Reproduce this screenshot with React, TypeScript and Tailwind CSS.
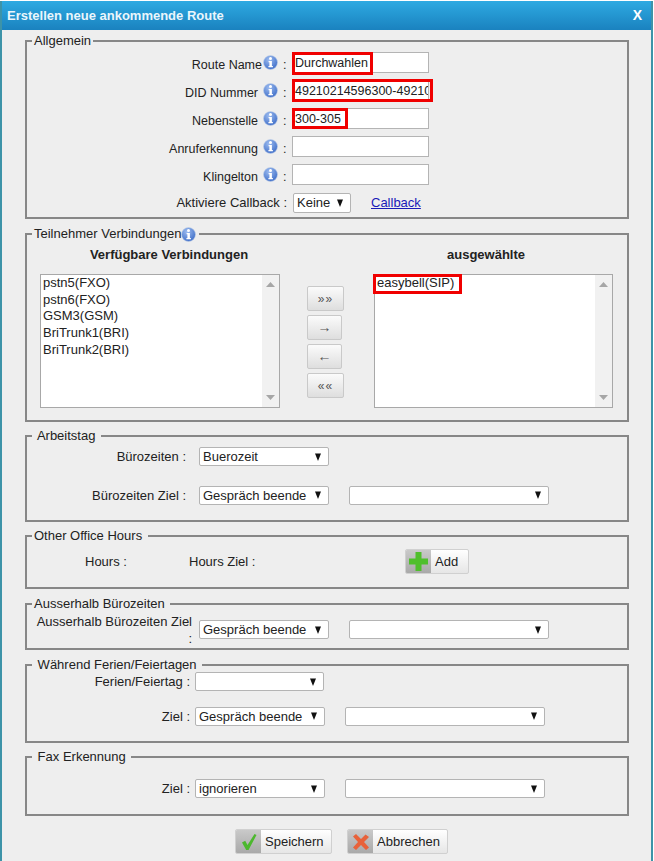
import React from "react";

function Info() {
  return (
    <svg width="15" height="15" viewBox="0 0 15 15" className="shrink-0">
      <defs>
        <radialGradient id="ig" cx="0.4" cy="0.3" r="0.8">
          <stop offset="0" stopColor="#9dbcf0" />
          <stop offset="1" stopColor="#3566c4" />
        </radialGradient>
      </defs>
      <circle cx="7.5" cy="7.5" r="7" fill="url(#ig)" stroke="#c5d3ea" strokeWidth="0.6" />
      <circle cx="7.5" cy="3.6" r="1.5" fill="#fff" />
      <path d="M5.600 5.900h3.300v5h1v1.300H5.400v-1.300h1V7.200h-.8z" fill="#fff" />
    </svg>
  );
}

function Arrow() {
  return (
    <svg width="6" height="8" viewBox="0 0 6 8" className="shrink-0">
      <path d="M0 .5h6L3 8z" fill="#111" />
    </svg>
  );
}

function Sel({ w, text, cls = "" }: { w: string; text?: string; cls?: string }) {
  return (
    <div className={`flex h-[19px] items-center justify-between rounded-[2px] border border-[#b4b4b4] bg-white pl-[3px] pr-[7px] text-[#222] ${w} ${cls}`}>
      <span className="whitespace-nowrap">{text}</span>
      <Arrow />
    </div>
  );
}

function Field({ legend, h, children, cls = "" }: { legend: React.ReactNode; h: string; children: React.ReactNode; cls?: string }) {
  return (
    <fieldset className={`ml-[23px] mr-[22px] min-w-0 border-2 border-[#878787] p-0 ${h} ${cls}`}>
      <legend className="ml-[5px] block h-[16px] whitespace-pre bg-[#eeeeee] px-[2px] leading-[16px]">{legend}</legend>
      {children}
    </fieldset>
  );
}

function TextRow({ label, gap, value, box, top }: { label: string; gap: string; value?: string; box?: string; top: string }) {
  return (
    <div className={`flex h-[21px] items-center text-[12.5px] ${top}`}>
      <div className="flex w-[251px] items-center justify-end">
        <span className={`pt-[6px] whitespace-nowrap ${gap}`}>{label}</span>
        <Info />
      </div>
      <span className="ml-[5px] w-[6px] pt-[6px]">:</span>
      <div className="relative ml-[3px] h-[21px] w-[137px]">
        <input
          readOnly
          value={value ?? ""}
          className="h-full w-full border border-[#b4b4b4] bg-white pl-[2px] text-[#222] outline-none"
        />
        {box ? <div className={`absolute border-[3px] border-[#f00000] ${box}`} /> : null}
      </div>
    </div>
  );
}

function ListBox({ items, w }: { items: React.ReactNode; w: string }) {
  return (
    <div className={`flex h-[134px] border border-[#a8a8a8] bg-white ${w}`}>
      <div className="flex-1 pl-[2px] leading-[16.7px] text-[#222]">{items}</div>
      <div className="flex w-[17px] flex-col items-center justify-between bg-[#f1f1f1] py-[7px]">
        <svg width="9" height="5" viewBox="0 0 9 5"><path d="M4.500 0L9 5H0z" fill="#a6a6a6" /></svg>
        <svg width="9" height="5" viewBox="0 0 9 5"><path d="M0 0h9L4.500 5z" fill="#a6a6a6" /></svg>
      </div>
    </div>
  );
}

function MoveBtn({ w, cls, children }: { w: string; cls: string; children: React.ReactNode }) {
  return (
    <div className={`flex h-[25px] items-center justify-center rounded-[2px] border border-[#c9c9c9] bg-gradient-to-b from-[#fbfbfb] to-[#dedede] text-[#555] ${w} ${cls}`}>
      {children}
    </div>
  );
}

function IconBtn({ icon, label, w }: { icon: React.ReactNode; label: string; w: string }) {
  return (
    <div className={`flex h-[25px] items-stretch overflow-hidden rounded-[2px] border border-[#d0d0d0] bg-gradient-to-b from-[#ffffff] to-[#e6e6e6] ${w}`}>
      <div className="flex w-[25px] items-center justify-center bg-gradient-to-b from-[#c9c9c9] to-[#a9a9a9]">{icon}</div>
      <span className="flex flex-1 items-center justify-start pl-[4px] text-[#222]">{label}</span>
    </div>
  );
}

export default function App() {
  return (
    <div className="h-[861px] w-[654px] overflow-hidden bg-white pt-[1px] font-['Liberation_Sans',sans-serif] text-[13px] text-[#222]">
      <div className="h-[860px] w-[653px] border-x-2 border-[#3d93a8] bg-[#eeeeee]">
        <div className="flex h-[29px] items-center justify-between bg-gradient-to-b from-[#2eaae2] to-[#1a82bf] pl-[5px] pr-[9px] text-[13px] font-bold text-[#eaf6fc]">
          <span>Erstellen neue ankommende Route</span>
          <span className="text-[14px] text-white">X</span>
        </div>

        <Field legend="Allgemein" h="h-[186px]" cls="mt-[3px]">
          <TextRow label="Route Name" gap="mr-[1px]" value="Durchwahlen" top="mt-[3px]" box="left-0 top-0 h-[23px] w-[81px]" />
          <TextRow label="DID Nummer" gap="mr-[5px]" value="49210214596300-49210" top="mt-[7px]" box="left-0 -top-[1px] h-[23px] w-[141px]" />
          <TextRow label="Nebenstelle" gap="mr-[5px]" value="300-305" top="mt-[7px]" box="left-0 top-0 h-[21px] w-[56px]" />
          <TextRow label="Anruferkennung" gap="mr-[5px]" top="mt-[7px]" />
          <TextRow label="Klingelton" gap="mr-[5px]" top="mt-[7px]" />
          <div className="mt-[8px] flex items-center">
            <span className="w-[260px] text-right">Aktiviere Callback :</span>
            <Sel w="w-[58px]" text="Keine" cls="ml-[6px] h-[20px]" />
            <a className="ml-[20px] text-[#1a1ab8] underline">Callback</a>
          </div>
        </Field>

        <Field
          legend={
            <span className="flex items-center">
              Teilnehmer Verbindungen
              <Info />
              <span className="w-[1px]" />
            </span>
          }
          h="h-[196px]"
          cls="mt-[7px]"
        >
          <div className="mt-[5px] flex h-[16px] items-center font-bold leading-[16px]">
            <div className="w-[284px] text-center">Verfügbare Verbindungen</div>
            <div className="ml-[115px] w-[120px] text-center">ausgewählte</div>
          </div>
          <div className="mt-[11px] flex items-start">
            <ListBox
              w="ml-[13px] w-[240px]"
              items={
                <>
                  <div>pstn5(FXO)</div>
                  <div>pstn6(FXO)</div>
                  <div>GSM3(GSM)</div>
                  <div>BriTrunk1(BRI)</div>
                  <div>BriTrunk2(BRI)</div>
                </>
              }
            />
            <div className="ml-[27px] mt-[12px] flex w-[37px] flex-col gap-[4px]">
              <MoveBtn w="w-[37px]" cls="text-[12px] tracking-[1px]">»»</MoveBtn>
              <MoveBtn w="w-[35px]" cls="text-[14px]">→</MoveBtn>
              <MoveBtn w="w-[35px]" cls="text-[14px]">←</MoveBtn>
              <MoveBtn w="w-[37px]" cls="text-[12px] tracking-[1px]">««</MoveBtn>
            </div>
            <ListBox
              w="ml-[30px] w-[239px]"
              items={
                <div className="relative">
                  easybell(SIP)
                  <div className="absolute -left-[4px] -top-[1px] h-[20px] w-[89px] border-[3px] border-[#f00000]" />
                </div>
              }
            />
          </div>
        </Field>

        <Field legend={" Arbeitstag "} h="h-[94px]" cls="mt-[6px]">
          <div className="mt-[3px] flex items-center">
            <span className="w-[159px] text-right">Bürozeiten :</span>
            <Sel w="w-[130px]" text="Buerozeit" cls="ml-[13px]" />
          </div>
          <div className="mt-[19px] flex items-center">
            <span className="w-[159px] text-right">Bürozeiten Ziel :</span>
            <Sel w="w-[130px]" text="Gespräch beende" cls="ml-[13px]" />
            <Sel w="w-[200px]" cls="ml-[20px]" />
          </div>
        </Field>

        <Field legend={"Other Office Hours "} h="h-[61px]" cls="mt-[6px]">
          <div className="mt-[5px] flex items-center">
            <span className="ml-[58px] w-[104px]">Hours :</span>
            <span className="w-[216px]">Hours Ziel :</span>
            <IconBtn
              w="w-[64px]"
              label="Add"
              icon={
                <svg width="19" height="19" viewBox="0 0 19 19">
                  <path d="M6.500 0h6v6.500H19v6h-6.500V19h-6v-6.500H0v-6h6.500z" fill="#4fbf2c" />
                </svg>
              }
            />
          </div>
        </Field>

        <Field legend={"Ausserhalb Bürozeiten "} h="h-[54px]" cls="mt-[7px]">
          <div className="flex items-start">
            <div className="ml-[5px] mt-[1px] w-[160px] text-right leading-[17px]">Ausserhalb Bürozeiten Ziel :</div>
            <Sel w="w-[130px]" text="Gespräch beende" cls="ml-[7px] mt-[8px]" />
            <Sel w="w-[200px]" cls="ml-[20px] mt-[8px]" />
          </div>
        </Field>

        <Field legend={" Während Ferien/Feiertagen "} h="h-[86px]" cls="mt-[7px]">
          <div className="-mt-[1px] flex items-center">
            <span className="w-[163px] text-right">Ferien/Feiertag :</span>
            <Sel w="w-[129px]" cls="ml-[5px]" />
          </div>
          <div className="mt-[15px] flex items-center">
            <span className="w-[163px] text-right">Ziel :</span>
            <Sel w="w-[130px]" text="Gespräch beende" cls="ml-[5px]" />
            <Sel w="w-[200px]" cls="ml-[20px]" />
          </div>
        </Field>

        <Field legend={" Fax Erkennung "} h="h-[67px]" cls="mt-[6px]">
          <div className="mt-[14px] flex items-center">
            <span className="w-[163px] text-right">Ziel :</span>
            <Sel w="w-[130px]" text="ignorieren" cls="ml-[5px]" />
            <Sel w="w-[200px]" cls="ml-[20px]" />
          </div>
        </Field>

        <div className="mt-[13px] flex pl-[233px]">
          <IconBtn
            w="w-[97px]"
            label="Speichern"
            icon={
              <svg width="16" height="18" viewBox="0 0 16 18">
                <path d="M1 9.500l3.200-1.800L6.500 12 13.500 1 15.500 2 7.500 17H5.200z" fill="#4cb82e" />
              </svg>
            }
          />
          <IconBtn
            w="w-[101px] ml-[15px]"
            label="Abbrechen"
            icon={
              <svg width="18" height="18" viewBox="0 0 18 18">
                <path d="M1 3.500L4 1l5 5 4.500-4.500L17 4l-5 5 5 5.500L14 17l-5-5-5 5-3-2.500 5-5.500z" fill="#e8623a" />
              </svg>
            }
          />
        </div>
      </div>
    </div>
  );
}
